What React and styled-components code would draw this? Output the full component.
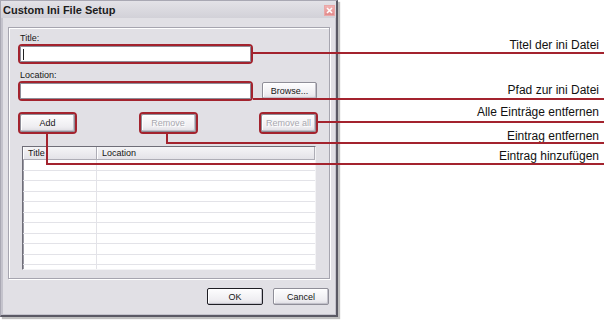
import React from 'react';
import styled, { createGlobalStyle } from 'styled-components';

const colors = {
  mark: '#a3232e',
  face: '#e1e0e5',
  frame: '#c4c3cc',
  text: '#151515',
  muted: '#a9a8b0',
  line: '#e3e3e8',
};

const GlobalStyle = createGlobalStyle`
  html, body {
    margin: 0;
    padding: 0;
    background: #fff;
  }

  body {
    font-family: "Liberation Sans", Arial, sans-serif;
    color: ${colors.text};
  }
`;

const Page = styled.div`
  position: relative;
  display: flex;
  width: 604px;
  height: 322px;
  overflow: hidden;
  background: #fff;
`;

const Window = styled.div`
  display: flex;
  flex-direction: column;
  flex: none;
  width: 338px;
  height: 317px;
  box-sizing: border-box;
  background: ${colors.frame};
  border: 1px solid;
  border-width: 1px 2px 2px 1px;
  border-color: #a9a8b3 #5a5964 #5a5964 #a9a8b3;
  box-shadow: 2px 2px 1px rgba(0, 0, 0, 0.25);
`;

const TitleBar = styled.div`
  display: flex;
  align-items: center;
  justify-content: space-between;
  height: 17px;
  padding: 0 1px 0 2px;
  background: linear-gradient(#e3e2e7, #d2d1d8);
`;

const Caption = styled.span`
  font-size: 11px;
  font-weight: bold;
  color: #1c1c1c;
`;

const CloseButton = styled.div`
  display: flex;
  align-items: center;
  justify-content: center;
  width: 11px;
  height: 11px;
  box-sizing: border-box;
  margin-top: 1px;
  background: linear-gradient(#f1b3b3, #e28a8b);
  border: 1px solid #e9a7a7;
`;

const Body = styled.div`
  display: flex;
  flex-direction: column;
  flex: 1;
  margin: 0 1px 1px 2px;
  padding: 9px 5px 9px;
  background: ${colors.face};
`;

const Group = styled.div`
  display: flex;
  flex-direction: column;
  align-items: flex-start;
  height: 252px;
  box-sizing: border-box;
  padding: 5px 13px 0 11px;
  border: 1px solid #a6a5af;
  box-shadow: inset 1px 1px 0 #fff, 1px 1px 0 #fff;
`;

const FieldLabel = styled.div`
  height: 11px;
  margin-top: ${(p) => p.$gap || 0}px;
  margin-bottom: ${(p) => p.$after || 0}px;
  font-size: 9px;
  line-height: 11px;
`;

const Highlight = styled.div`
  display: flex;
  margin: -2px;
  border: 2px solid ${colors.mark};
  border-radius: 4px;
`;

const TextBox = styled.div`
  display: flex;
  align-items: center;
  width: 231px;
  height: 16px;
  box-sizing: border-box;
  padding-left: 2px;
  background: #fff;
  border: 1px solid #8f8e99;
`;

const Caret = styled.span`
  width: 1px;
  height: 11px;
  background: #222;
`;

const InputRow = styled.div`
  display: flex;
  align-items: center;
  gap: 11px;
`;

const ButtonRow = styled.div`
  display: flex;
  align-self: stretch;
  justify-content: space-between;
  margin-top: 15px;
`;

const Button = styled.div`
  display: flex;
  align-items: center;
  justify-content: center;
  width: ${(p) => p.$width || 55}px;
  height: ${(p) => p.$height || 18}px;
  box-sizing: border-box;
  font-size: 9px;
  color: ${(p) => (p.$disabled ? colors.muted : colors.text)};
  text-shadow: ${(p) => (p.$disabled ? '1px 1px 0 #fff' : 'none')};
  background: linear-gradient(#fdfdfe, #eeedf1 75%, #dedde3);
  border: 1px solid ${(p) => (p.$primary ? '#1e1e24' : '#8f8e98')};
  border-radius: 2px;
  box-shadow: inset -1px -1px 0 #c2c1ca, inset 1px 1px 0 #fff;
`;

const ListView = styled.div`
  display: flex;
  flex-direction: column;
  align-self: stretch;
  height: 124px;
  box-sizing: border-box;
  margin: 14px 0 0 2px;
  overflow: hidden;
  background: #fff;
  border: 1px solid;
  border-color: #6f6e78 #f3f3f5 #f3f3f5 #6f6e78;
  box-shadow: inset 1px 1px 0 #9a99a3;
`;

const HeaderRow = styled.div`
  display: grid;
  grid-template-columns: 74px 1fr;
  flex: none;
  height: 12px;
  background: linear-gradient(#f5f5f7, #e4e3e8);
  border-bottom: 1px solid #aeadb6;
`;

const HeaderCell = styled.div`
  padding-left: 5px;
  font-size: 9px;
  line-height: 12px;
  border-right: 1px solid #aeadb6;
  box-shadow: inset 1px 0 0 #fff;
`;

const Row = styled.div`
  display: grid;
  grid-template-columns: 74px 1fr;
  flex: none;
  height: 10.5px;
  box-sizing: border-box;
  border-bottom: 1px solid ${colors.line};
`;

const Cell = styled.div`
  border-right: 1px solid ${(p) => (p.$last ? 'transparent' : colors.line)};
`;

const Footer = styled.div`
  display: flex;
  justify-content: flex-end;
  gap: 10px;
  margin-top: 9px;
  padding-right: 1px;
`;

const Callouts = styled.div`
  display: flex;
  flex-direction: column;
  align-items: flex-end;
  flex: 1;
  padding-right: 5px;
`;

const Callout = styled.div`
  margin-top: ${(p) => p.$gap}px;
  font-size: 12px;
  line-height: 14px;
  color: #111;
  white-space: nowrap;
`;

const Leaders = styled.svg`
  position: absolute;
  top: 0;
  left: 0;
  pointer-events: none;
`;

const callouts = [
  { text: 'Titel der ini Datei', gap: 38, points: '253,53 604,53' },
  { text: 'Pfad zur ini Datei', gap: 31, points: '253,99 604,99' },
  { text: 'Alle Einträge entfernen', gap: 8, points: '318,122 604,122' },
  { text: 'Eintrag entfernen', gap: 10, points: '167,133 167,143 604,143' },
  { text: 'Eintrag hinzufügen', gap: 6, points: '47,133 47,164 604,164' },
];

const rows = Array.from({ length: 11 }, (_, i) => i);

const App = () => (
  <Page>
    <GlobalStyle />
    <Window>
      <TitleBar>
        <Caption>Custom Ini File Setup</Caption>
        <CloseButton>
          <svg width="7" height="7" viewBox="0 0 7 7">
            <path d="M1 1L6 6M6 1L1 6" stroke="#fff" strokeWidth="1.6" />
          </svg>
        </CloseButton>
      </TitleBar>
      <Body>
        <Group>
          <FieldLabel $after={2}>Title:</FieldLabel>
          <Highlight>
            <TextBox>
              <Caret />
            </TextBox>
          </Highlight>
          <FieldLabel $gap={8} $after={1}>
            Location:
          </FieldLabel>
          <InputRow>
            <Highlight>
              <TextBox />
            </Highlight>
            <Button $width={55} $height={17}>
              Browse...
            </Button>
          </InputRow>
          <ButtonRow>
            <Highlight>
              <Button>Add</Button>
            </Highlight>
            <Highlight>
              <Button $disabled>Remove</Button>
            </Highlight>
            <Highlight>
              <Button $disabled>Remove all</Button>
            </Highlight>
          </ButtonRow>
          <ListView>
            <HeaderRow>
              <HeaderCell>Title</HeaderCell>
              <HeaderCell>Location</HeaderCell>
            </HeaderRow>
            {rows.map((i) => (
              <Row key={i}>
                <Cell />
                <Cell $last />
              </Row>
            ))}
          </ListView>
        </Group>
        <Footer>
          <Button $width={56} $height={17} $primary>
            OK
          </Button>
          <Button $width={56} $height={17}>
            Cancel
          </Button>
        </Footer>
      </Body>
    </Window>
    <Callouts>
      {callouts.map((c) => (
        <Callout key={c.text} $gap={c.gap}>
          {c.text}
        </Callout>
      ))}
    </Callouts>
    <Leaders width="604" height="322">
      {callouts.map((c) => (
        <polyline
          key={c.text}
          points={c.points}
          fill="none"
          stroke={colors.mark}
          strokeWidth="2"
        />
      ))}
    </Leaders>
  </Page>
);

export default App;
